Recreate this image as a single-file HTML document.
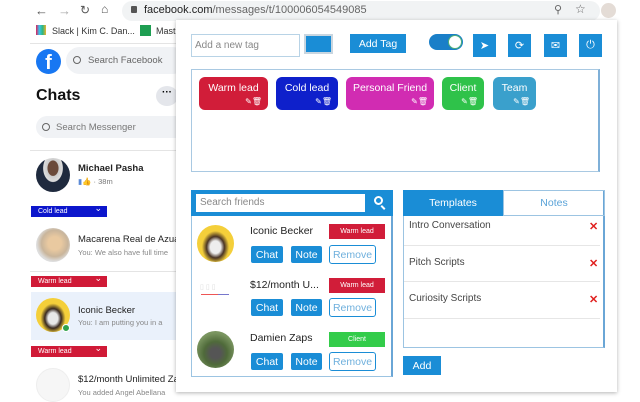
<!DOCTYPE html>
<html><head><meta charset="utf-8"><style>
*{box-sizing:border-box;margin:0;padding:0}
body{width:640px;height:400px;overflow:hidden;background:#fff;font-family:"Liberation Sans",sans-serif;position:relative}
.a{position:absolute}
.btn{position:absolute;background:#1a8dd6;color:#fff;font-size:10.5px;display:flex;align-items:center;justify-content:center;border-radius:2px}
.rem{position:absolute;border:1px solid #1a8dd6;color:#6fb0dd;font-size:10.5px;display:flex;align-items:center;justify-content:center;border-radius:3px;background:#fff}
.tag{position:absolute;top:77px;height:33px;border-radius:6px;color:#fff;font-size:10.5px;text-align:center;padding-top:5px}
.tag i{position:absolute;right:6px;bottom:4px;font-style:normal;font-size:8px}
.badge{position:absolute;height:15px;color:#fff;font-size:7px;display:flex;align-items:center;justify-content:center}
.lb{position:absolute;left:31px;width:76px;height:11px;color:#fff;font-size:7px;padding-left:7px;line-height:11px}
.lb:after{content:"⌄";position:absolute;right:5px;top:-3px;font-size:9px}
.ib{position:absolute;top:34px;width:23px;height:23px;background:#1a8dd6;color:#fff;font-size:11px;display:flex;align-items:center;justify-content:center}
.x{position:absolute;left:589px;color:#e0201f;font-size:11px;font-weight:bold}
.ti{position:absolute;left:409px;font-size:10px;color:#444}
.hl{position:absolute;left:404px;width:196px;height:1px;background:#e6e6e6}
</style></head><body>
<div class="a" style="left:35px;top:3px;font-size:13px;color:#555">←</div>
<div class="a" style="left:58px;top:3px;font-size:13px;color:#aaa">→</div>
<div class="a" style="left:80px;top:3px;font-size:12px;color:#555">↻</div>
<div class="a" style="left:101px;top:2px;font-size:12px;color:#555">⌂</div>
<div class="a" style="left:122px;top:1px;width:478px;height:20px;border-radius:10px;background:#f1f3f4"></div>
<div class="a" style="left:131px;top:6px;width:6px;height:7px;background:#555;border-radius:1px"></div>
<div class="a" style="left:144px;top:4px;font-size:11px;color:#222">facebook.com<span style="color:#666">/messages/t/100006054549085</span></div>
<div class="a" style="left:554px;top:3px;font-size:11px;color:#666">⚲</div>
<div class="a" style="left:575px;top:2px;font-size:12px;color:#666">☆</div>
<div class="a" style="left:601px;top:3px;width:15px;height:15px;border-radius:50%;background:#e4dcd6"></div>
<div class="a" style="left:36px;top:25px;width:10px;height:10px;background:linear-gradient(90deg,#e01e5a,#36c5f0,#2eb67d,#ecb22e)"></div>
<div class="a" style="left:52px;top:26px;font-size:9px;color:#333">Slack | Kim C. Dan...</div>
<div class="a" style="left:140px;top:25px;width:11px;height:11px;background:#1e9e52"></div>
<div class="a" style="left:156px;top:26px;font-size:9px;color:#333">Mast</div>
<div class="a" style="left:30px;top:43px;width:150px;height:1px;background:#e4e4e4"></div>
<div class="a" style="left:36px;top:49px;width:25px;height:25px;border-radius:50%;background:#1877f2;color:#fff;font-weight:bold;font-size:20px;text-align:center;line-height:28px;overflow:hidden">f</div>
<div class="a" style="left:66px;top:47px;width:120px;height:27px;border-radius:14px;background:#f0f2f5;font-size:9.5px;color:#666;padding:8px 0 0 22px">Search Facebook</div>
<div class="a" style="left:73px;top:56px;width:8px;height:8px;border:1.3px solid #666;border-radius:50%"></div>
<div class="a" style="left:36px;top:87px;font-size:16px;font-weight:bold;color:#111">Chats</div>
<div class="a" style="left:156px;top:86px;width:22px;height:20px;border-radius:50%;background:#e4e6eb;font-size:10px;text-align:center;line-height:14px;font-weight:bold">···</div>
<div class="a" style="left:36px;top:116px;width:150px;height:22px;border-radius:11px;background:#f0f2f5;font-size:9.5px;color:#777;padding:6px 0 0 20px">Search Messenger</div>
<div class="a" style="left:42px;top:123px;width:8px;height:8px;border:1.3px solid #666;border-radius:50%"></div>
<div class="a" style="left:30px;top:150px;width:150px;height:1px;background:#e4e4e4"></div>
<div class="a" style="left:36px;top:158px;width:34px;height:34px;border-radius:50%;background:radial-gradient(ellipse at 50% 30%,#6b4a3a 22%,#ccc 24%,#ddd 40%,#1f2a3e 42%)"></div>
<div class="a" style="left:78px;top:163px;font-size:9.5px;font-weight:bold;color:#222">Michael Pasha</div>
<div class="a" style="left:78px;top:177px;font-size:7.5px;color:#777"><span style="color:#5b8ad6">▮👍</span> · 38m</div>
<div class="lb" style="top:206px;background:#0c16cc">Cold lead</div>
<div class="a" style="left:36px;top:228px;width:34px;height:34px;border-radius:50%;background:radial-gradient(circle at 55% 45%,#e9c9a0 25%,#c9b59b 50%,#ddd 68%)"></div>
<div class="a" style="left:78px;top:234px;font-size:9.5px;color:#222">Macarena Real de Azua</div>
<div class="a" style="left:78px;top:248px;font-size:7.5px;color:#888">You: We also have full time</div>
<div class="a" style="left:30px;top:271px;width:150px;height:1px;background:#e4e4e4"></div>
<div class="lb" style="top:276px;background:#d01a37">Warm lead</div>
<div class="a" style="left:31px;top:292px;width:150px;height:48px;background:#eaf1fb"></div>
<div class="a" style="left:36px;top:298px;width:34px;height:34px;border-radius:50%;background:radial-gradient(ellipse at 50% 60%,#e8e8e8 20%,#3a2a20 34%,#f4cf3a 52%)"></div>
<div class="a" style="left:62px;top:324px;width:8px;height:8px;border-radius:50%;background:#31a24c;border:1.5px solid #fff"></div>
<div class="a" style="left:78px;top:305px;font-size:9.5px;color:#222">Iconic Becker</div>
<div class="a" style="left:78px;top:318px;font-size:7.5px;color:#888">You: I am putting you in a</div>
<div class="lb" style="top:346px;background:#d01a37">Warm lead</div>
<div class="a" style="left:36px;top:368px;width:34px;height:34px;border-radius:50%;background:#f6f6f6;border:1px solid #eee"></div>
<div class="a" style="left:78px;top:374px;font-size:9.5px;color:#222">$12/month Unlimited Za</div>
<div class="a" style="left:78px;top:388px;font-size:7.5px;color:#888">You added Angel Abellana</div>
<div class="a" style="left:176px;top:20px;width:441px;height:372px;background:#fff;box-shadow:0 1px 4px rgba(0,0,0,.3)"></div>
<div class="a" style="left:191px;top:34px;width:109px;height:23px;border:1px solid #b8d3e6;font-size:10px;color:#888;padding:5px 0 0 3px">Add a new tag</div>
<div class="a" style="left:304px;top:34px;width:29px;height:20px;border:2px solid #c9d6e0;background:#1a8dd6"></div>
<div class="btn" style="left:350px;top:34px;width:56px;height:19px;border-radius:0">Add Tag</div>
<div class="a" style="left:429px;top:34px;width:34px;height:16px;border-radius:8px;background:#1a7fc8"></div>
<div class="a" style="left:448px;top:35px;width:14px;height:14px;border-radius:50%;background:#fff;border:1px solid #4caf7a"></div>
<div class="ib" style="left:473px">➤</div>
<div class="ib" style="left:508px">⟳</div>
<div class="ib" style="left:544px">✉</div>
<div class="ib" style="left:579px">⏻</div>
<div class="a" style="left:191px;top:69px;width:409px;height:103px;border:1px solid #a9c9e2;border-right:2px solid #7fb0d8"></div>
<div class="tag" style="left:199px;width:69px;background:#d11d39">Warm lead<i>✎🗑</i></div>
<div class="tag" style="left:276px;width:62px;background:#0e20cb">Cold lead<i>✎🗑</i></div>
<div class="tag" style="left:346px;width:88px;background:#d12cb2">Personal Friend<i>✎🗑</i></div>
<div class="tag" style="left:442px;width:42px;background:#2fc24a">Client<i>✎🗑</i></div>
<div class="tag" style="left:493px;width:43px;background:#3aa0cc">Team<i>✎🗑</i></div>
<div class="a" style="left:191px;top:190px;width:202px;height:187px;border:1px solid #9cc4e2;border-right:2px solid #6aa6d6"></div>
<div class="a" style="left:191px;top:190px;width:202px;height:26px;background:#1a8dd6"></div>
<div class="a" style="left:196px;top:194px;width:169px;height:18px;background:#fff;font-size:10px;color:#888;padding:3px 0 0 4px">Search friends</div>
<div class="a" style="left:374px;top:196px;width:9px;height:9px;border:2px solid #fff;border-radius:50%"></div>
<div class="a" style="left:382px;top:205px;width:2px;height:5px;background:#fff;transform:rotate(-45deg)"></div>
<div class="a" style="left:197px;top:225px;width:37px;height:37px;border-radius:50%;background:radial-gradient(ellipse at 50% 60%,#eee 20%,#4a3424 34%,#f4cf3a 52%)"></div>
<div class="a" style="left:200px;top:283px;width:30px;height:10px;font-size:7px;color:#ddd;letter-spacing:2px">▯▯▯</div>
<div class="a" style="left:201px;top:294px;width:28px;height:1px;background:linear-gradient(90deg,#e55 0 60%,#77c 60%)"></div>
<div class="a" style="left:197px;top:331px;width:37px;height:37px;border-radius:50%;background:radial-gradient(circle at 50% 60%,#555 18%,#4f6a3a 40%,#7a9560 70%)"></div>
<div class="a" style="left:250px;top:225px;font-size:10.5px;color:#222">Iconic Becker</div>
<div class="a" style="left:250px;top:279px;font-size:10.5px;color:#222">$12/month U...</div>
<div class="a" style="left:250px;top:332px;font-size:10.5px;color:#222">Damien Zaps</div>
<div class="badge" style="left:329px;top:224px;width:56px;background:#d11d39">Warm lead</div>
<div class="badge" style="left:329px;top:278px;width:56px;background:#d11d39">Warm lead</div>
<div class="badge" style="left:329px;top:332px;width:56px;background:#33cc4a">Client</div>
<div class="btn" style="left:251px;top:246px;width:32px;height:17px">Chat</div>
<div class="btn" style="left:291px;top:246px;width:31px;height:17px">Note</div>
<div class="rem" style="left:329px;top:245px;width:47px;height:19px">Remove</div>
<div class="btn" style="left:251px;top:299px;width:32px;height:17px">Chat</div>
<div class="btn" style="left:291px;top:299px;width:31px;height:17px">Note</div>
<div class="rem" style="left:329px;top:298px;width:47px;height:19px">Remove</div>
<div class="btn" style="left:251px;top:353px;width:32px;height:17px">Chat</div>
<div class="btn" style="left:291px;top:353px;width:31px;height:17px">Note</div>
<div class="rem" style="left:329px;top:352px;width:47px;height:19px">Remove</div>
<div class="a" style="left:403px;top:190px;width:202px;height:158px;border:1px solid #9cc4e2;border-right:2px solid #6aa6d6"></div>
<div class="a" style="left:403px;top:190px;width:100px;height:26px;background:#1a8dd6;color:#fff;font-size:10.5px;text-align:center;line-height:26px">Templates</div>
<div class="a" style="left:503px;top:190px;width:102px;height:26px;border:1px solid #9cc4e2;color:#5aa3d8;font-size:10.5px;text-align:center;line-height:24px">Notes</div>
<div class="ti" style="top:220px">Intro Conversation</div>
<div class="ti" style="top:257px">Pitch Scripts</div>
<div class="ti" style="top:293px">Curiosity Scripts</div>
<div class="x" style="top:220px">✕</div>
<div class="x" style="top:257px">✕</div>
<div class="x" style="top:293px">✕</div>
<div class="hl" style="top:245px"></div>
<div class="hl" style="top:281px"></div>
<div class="hl" style="top:318px"></div>
<div class="btn" style="left:403px;top:356px;width:38px;height:19px;border-radius:0">Add</div>
</body></html>
